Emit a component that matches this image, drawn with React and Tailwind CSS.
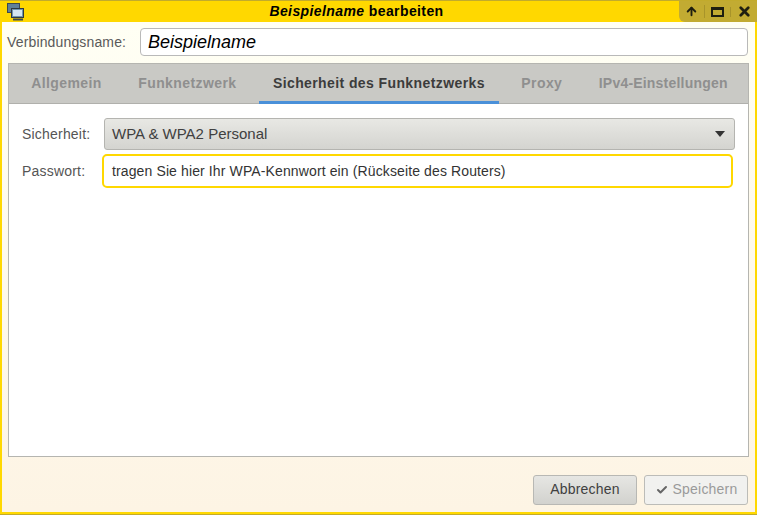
import React from "react"
import { ArrowUp, Check, X } from "lucide-react"

const tabs = [
  { name: "Allgemein", spacing: "tracking-[0.4px]" },
  { name: "Funknetzwerk", spacing: "tracking-[0.4px]" },
  { name: "Sicherheit des Funknetzwerks", active: true, spacing: "tracking-[0.4px]" },
  { name: "Proxy", spacing: "tracking-[0.4px]" },
  { name: "IPv4-Einstellungen", spacing: "tracking-[0.2px]" },
]

function WindowIcon() {
  return (
    <svg width="18" height="18" viewBox="0 0 18 18">
      <rect x="1.5" y="0.5" width="12" height="9" fill="#5f8098" stroke="#3c4a50" />
      <rect x="5.5" y="5.5" width="12" height="9" fill="#6f94b0" stroke="#2f3a40" />
      <rect x="7" y="7" width="9" height="6" fill="#d4e6f2" />
      <path d="M7 16.5h10" stroke="#3c4a50" strokeWidth="2" />
    </svg>
  )
}

export default function App() {
  return (
    <div className="h-[515px] w-[757px] flex flex-col overflow-hidden bg-[#ffd800] font-['Liberation_Sans',sans-serif] border-t border-b border-[#c2ab2c]">
      <div className="h-[21px] flex items-center justify-between pl-[6px]">
        <WindowIcon />
        <div className="flex-1 text-center text-[14px] font-bold tracking-[0.4px] text-black pl-[10px]">
          <span className="italic">Beispielname</span> bearbeiten
        </div>
        <div className="h-[21px] w-[78px] flex items-center rounded-bl-[6px] bg-[#c2ab32] text-[#1f1f10]">
          <div className="w-[26px] flex justify-center border-r border-[#a8942a]">
            <ArrowUp size={13} strokeWidth={3.5} />
          </div>
          <div className="w-[26px] flex justify-center border-r border-[#a8942a]">
            <div className="h-[10px] w-[13px] border-2 border-t-[3px] border-[#1f1f10]" />
          </div>
          <div className="w-[26px] flex justify-center">
            <X size={15} strokeWidth={4.5} />
          </div>
        </div>
      </div>

      <div className="flex-1 flex flex-col mx-[2px] mb-[2px] bg-gradient-to-b from-[#fffff4] to-[#fdf4e4] pl-[6px] pr-[6px]">
        <div className="h-[41px] flex items-center gap-[14px] pb-[1px]">
          <span className="w-[119px] -ml-[1px] text-[14px] tracking-[0.15px] whitespace-nowrap text-[#5a5a5a]">Verbindungsname:</span>
          <div className="h-[28px] w-[608px] flex items-center rounded-[4px] border border-[#b9b9b9] bg-white pl-[7px] text-[18px] italic text-black">
            Beispielname
          </div>
        </div>

        <div className="h-[394px] flex flex-col border border-[#b5b5b0] bg-white">
          <div className="h-[40px] flex shrink-0 justify-start bg-[#c9c9c5] border-b border-[#b0b0ac] pl-[4px]">
            {tabs.map((tab) => (
              <div
                key={tab.name}
                className={`h-[40px] mx-[4.25px] flex items-center px-[14px] pt-[2px] text-[14px] font-bold border-b-[3px] ${tab.spacing} ${
                  tab.active ? "text-[#3c3c3c] border-[#4a90d9]" : "text-[#8f8f8f] border-transparent"
                }`}
              >
                {tab.name}
              </div>
            ))}
          </div>

          <div className="flex flex-col px-[13px] pt-[14px]">
            <div className="h-[32px] flex items-center">
              <span className="w-[82px] text-[14px] tracking-[0.2px] text-[#555555]">Sicherheit:</span>
              <div className="h-[32px] w-[631px] flex items-center justify-between rounded-[3px] border border-[#b4b4b0] bg-gradient-to-b from-[#e8e8e4] to-[#d4d4d0] pl-[7px] pr-[9px] text-[15px] text-[#404040]">
                WPA &amp; WPA2 Personal
                <div className="h-0 w-0 border-x-[5px] border-t-[6px] border-x-transparent border-t-[#333333]" />
              </div>
            </div>
            <div className="h-[34px] mt-[4px] flex items-center">
              <span className="w-[80px] text-[14px] tracking-[0.2px] text-[#555555]">Passwort:</span>
              <div className="h-[34px] w-[631px] flex items-center rounded-[5px] border-2 border-[#ffd800] bg-white pl-[8px] text-[14px] tracking-[0.12px] text-[#333333]">
                tragen Sie hier Ihr WPA-Kennwort ein (Rückseite des Routers)
              </div>
            </div>
          </div>
        </div>

        <div className="flex flex-1 items-center justify-end gap-[7px] pr-[1px] pt-[10px]">
          <div className="h-[30px] w-[104px] flex items-center justify-center rounded-[3px] border border-[#b8b8b4] bg-gradient-to-b from-[#e6e6e3] to-[#d2d2ce] text-[14px] tracking-[0.2px] text-[#404040]">
            Abbrechen
          </div>
          <div className="h-[30px] w-[104px] flex items-center justify-center gap-[5px] rounded-[3px] border border-[#bcbcb8] bg-[#f1f1ef] pl-[1px] text-[14px] tracking-[0.2px] text-[#9a9a9a]">
            <Check size={12} strokeWidth={4} className="text-[#666666]" />
            Speichern
          </div>
        </div>
      </div>
    </div>
  )
}
